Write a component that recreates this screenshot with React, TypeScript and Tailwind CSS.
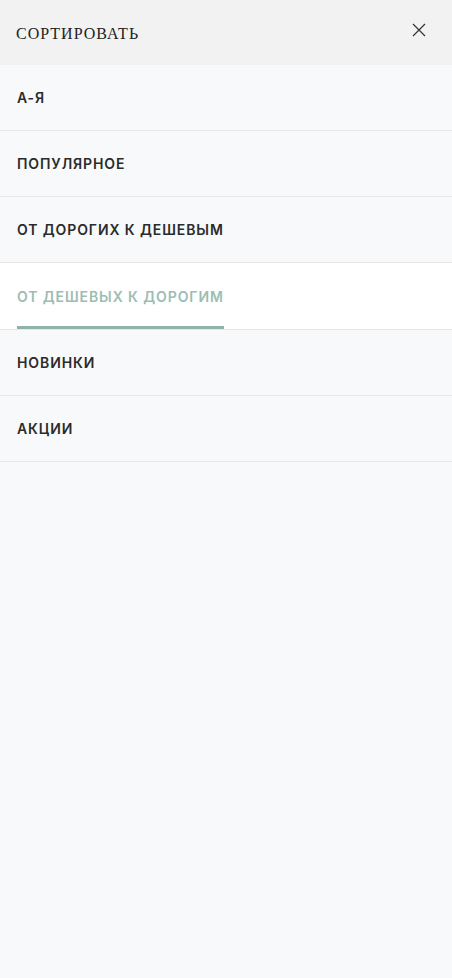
import { useState } from "react"

const OPTIONS = [
  "А-Я",
  "Популярное",
  "От дорогих к дешевым",
  "От дешевых к дорогим",
  "Новинки",
  "Акции",
]

export default function App() {
  const [active, setActive] = useState(3)

  return (
    <div className="min-h-[978px] w-[452px] bg-[#f8f9fa] [font-family:Inter,'Noto_Sans',sans-serif]">
      <div className="flex h-[65px] items-center justify-between bg-[#f2f2f2] pl-4 pr-[26px]">
        <span className="pt-[2px] text-[16px] uppercase tracking-[1px] text-[#222] [font-family:'Liberation_Serif',serif]">
          Сортировать
        </span>
        <button type="button" className="-mt-[6px] text-[#333]">
          <svg width="14" height="14" viewBox="0 0 14 14" fill="none" stroke="currentColor" strokeWidth="1.2">
            <path d="M1 1L13 13M13 1L1 13" />
          </svg>
        </button>
      </div>
      <ul>
        {OPTIONS.map((label, i) => (
          <li key={label} className={`border-b border-[#e6e6e6] ${i === active ? "bg-white" : ""}`}>
            <button
              type="button"
              onClick={() => setActive(i)}
              className={`flex w-full items-center px-4 text-left ${i === active ? "h-[66px]" : "h-[65px]"}`}
            >
              <span
                className={`relative flex h-full items-center pl-px text-[14px] font-semibold uppercase tracking-[0.9px] ${i === active ? "text-[#9cbdb2]" : "text-[#2b2b2b]"}`}
              >
                {label}
                {i === active && <span className="absolute bottom-0 left-px right-0 h-[3px] bg-[#8fb3a8]" />}
              </span>
            </button>
          </li>
        ))}
      </ul>
    </div>
  )
}
